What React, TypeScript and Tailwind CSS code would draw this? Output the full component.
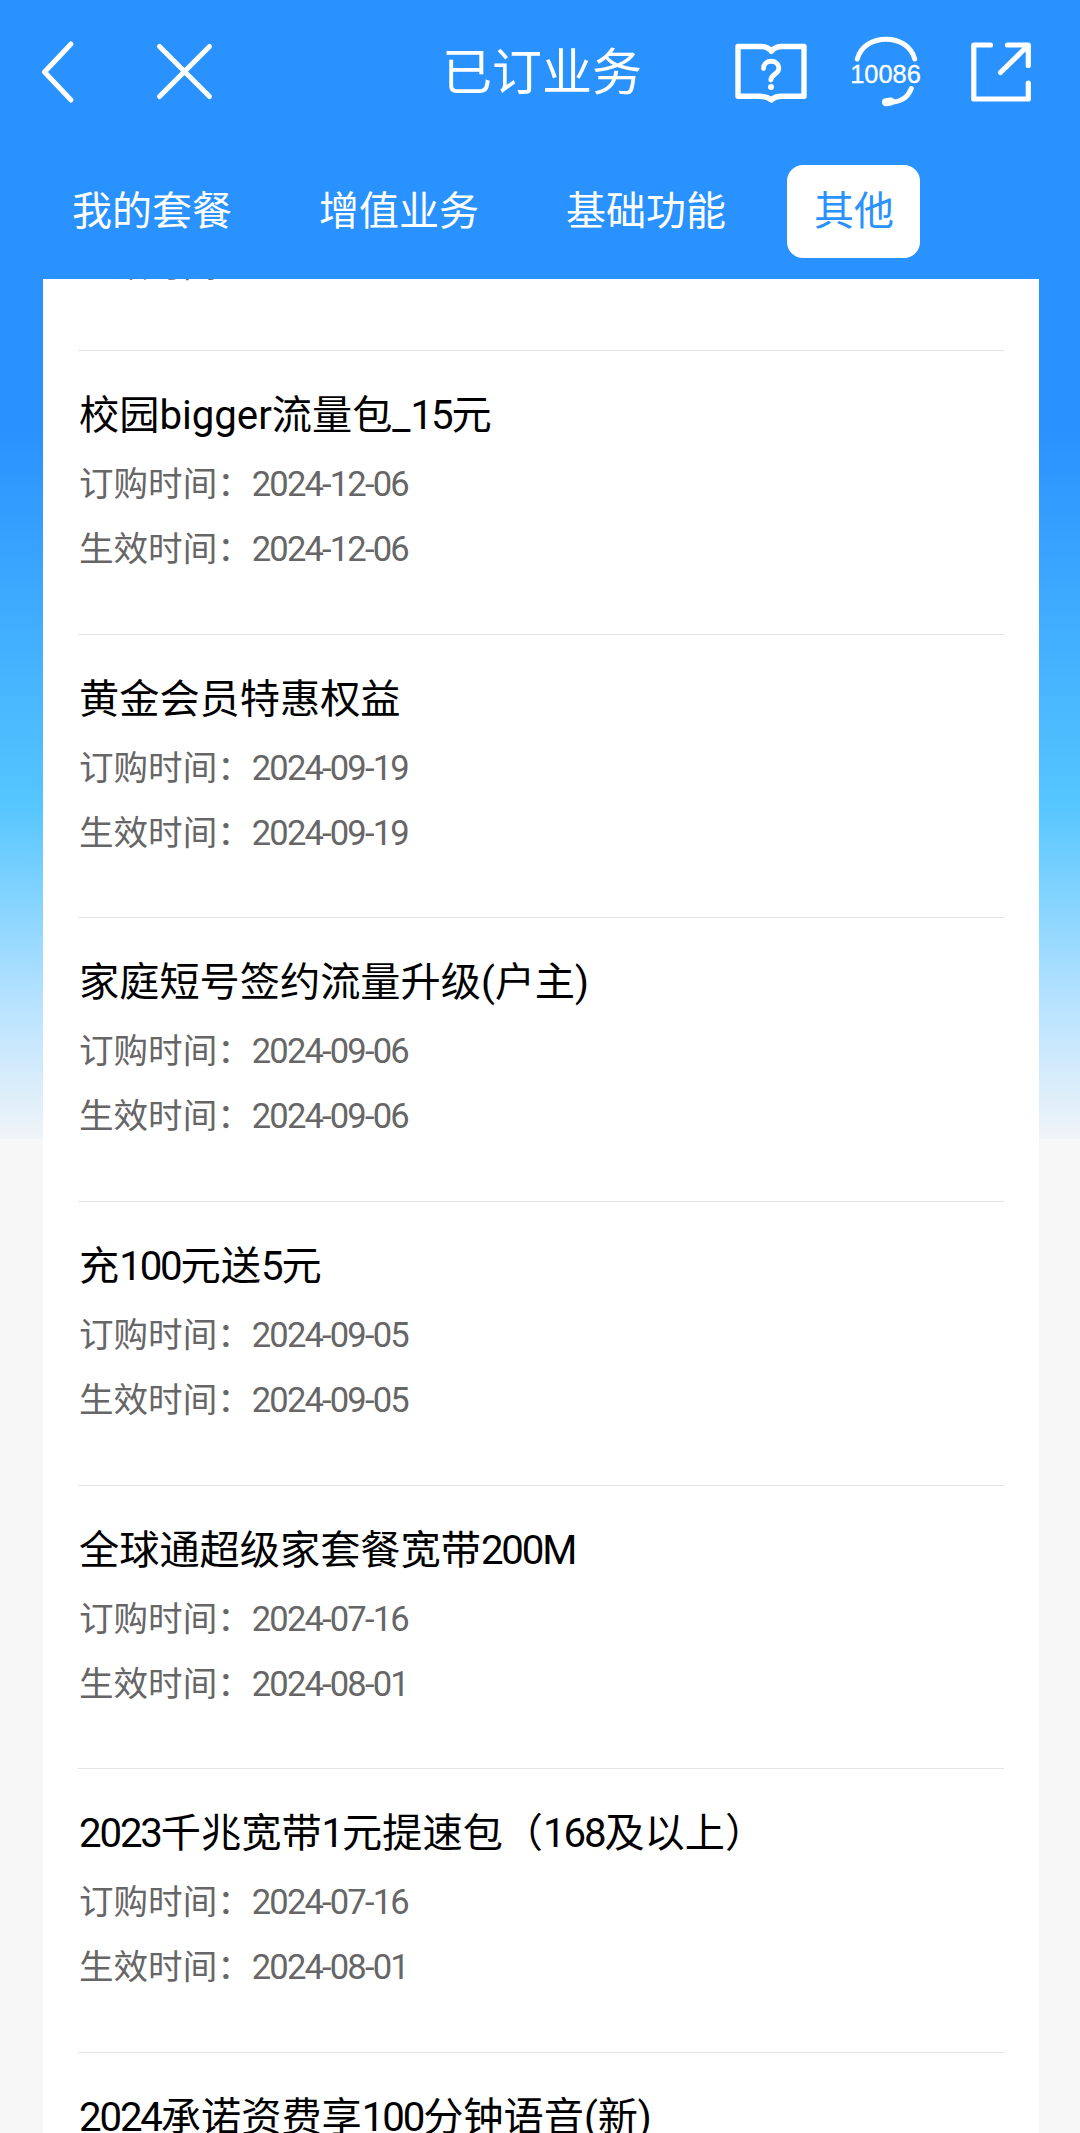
import { Fragment } from 'react';

interface Service {
  name: string;
  ordered: string;
  effective: string;
}

const tabs = ['我的套餐', '增值业务', '基础功能', '其他'];

const services: Service[] = [
  { name: '校园bigger流量包_15元', ordered: '2024-12-06', effective: '2024-12-06' },
  { name: '黄金会员特惠权益', ordered: '2024-09-19', effective: '2024-09-19' },
  { name: '家庭短号签约流量升级(户主)', ordered: '2024-09-06', effective: '2024-09-06' },
  { name: '充100元送5元', ordered: '2024-09-05', effective: '2024-09-05' },
  { name: '全球通超级家套餐宽带200M', ordered: '2024-07-16', effective: '2024-08-01' },
  { name: '2023千兆宽带1元提速包（168及以上）', ordered: '2024-07-16', effective: '2024-08-01' },
  { name: '2024承诺资费享100分钟语音(新)', ordered: '', effective: '' },
];

// Digits sit tighter than the rest of the text
function Tight({ text }: { text: string }) {
  return (
    <>
      {text.split(/([\d-]+)/).map((part, i) =>
        i % 2 ? (
          <span key={i} className="tracking-[-0.053em]">
            {part}
          </span>
        ) : (
          <Fragment key={i}>{part}</Fragment>
        )
      )}
    </>
  );
}

function Header() {
  return (
    <header className="grid h-36 grid-cols-[345px_1fr_345px] items-center text-white">
      <div className="flex items-center pl-10">
        <svg width="36" height="64" viewBox="40 40 36 64" fill="none" stroke="currentColor" strokeWidth="5" strokeLinecap="round" strokeLinejoin="round">
          <path d="M71 44 44.5 72 71 100" />
        </svg>
        <svg className="ml-[78px]" width="62" height="64" viewBox="154 40 62 64" fill="none" stroke="currentColor" strokeWidth="5" strokeLinecap="round">
          <path d="M159.5 46.5 209.5 96.5M209.5 46.5 159.5 96.5" />
        </svg>
      </div>

      <h1 className="pt-0.5 pl-1 text-center text-[50px] leading-none">已订业务</h1>

      <div className="flex items-center">
        <svg width="76" height="80" viewBox="735 32 76 80" fill="none" stroke="currentColor" strokeWidth="5.4" strokeLinecap="round" strokeLinejoin="round">
          <path d="M738 46.5H761Q768 46.5 771.3 51.3Q775 46.5 782 46.5H804V96.3H782Q775 96.3 771.3 100Q767 96.3 760 96.3H738Z" />
          <path d="M763.5 68.5C763.5 58.8 778.8 58.8 778.8 68.5C778.8 74 770.8 74.5 770.8 80" strokeWidth="4.8" />
          <circle cx="771" cy="87" r="3" fill="currentColor" stroke="none" />
        </svg>
        <svg className="ml-9" width="80" height="80" viewBox="847 32 80 80" fill="none" stroke="currentColor" strokeWidth="5" strokeLinecap="round">
          <path d="M857.3 59C864 32.5 908 32.5 914.7 59" />
          <path d="M911.3 88.5C908.5 96 902 101.5 892.5 102" />
          <path d="M886 102.2 890.5 101.5" strokeWidth="8" />
          <text x="885.5" y="83" textAnchor="middle" fontSize="25.4" fill="currentColor" stroke="currentColor" strokeWidth="0.3" fontFamily="Liberation Sans, sans-serif">
            10086
          </text>
        </svg>
        <svg className="ml-10" width="66" height="80" viewBox="967 32 66 80" fill="none" stroke="currentColor" strokeWidth="5.2" strokeLinecap="round" strokeLinejoin="round">
          <path d="M990.5 45H973.8V99H1028.3V83M1007.5 45H1028.3V65.5M1027 46.5 1000.5 72.5" />
        </svg>
      </div>
    </header>
  );
}

function Tabs({ active }: { active: string }) {
  return (
    <nav className="flex h-[135px] gap-[33px] pt-[21px] pl-[45px]">
      {tabs.map((tab) => (
        <button
          key={tab}
          className={
            tab === active
              ? 'ml-px h-[93px] rounded-2xl bg-white pr-[26px] pl-[27px] text-[40px] leading-none text-[#2a92ff]'
              : 'h-[93px] px-[27px] text-[40px] leading-none text-white'
          }
        >
          {tab}
        </button>
      ))}
    </nav>
  );
}

function ServiceItem({ service }: { service: Service }) {
  return (
    <li className="h-[283.7px] shrink-0 border-t border-[#e4e4e4] pt-[35px]">
      <h2 className="pl-px text-[40.2px] leading-[60px] whitespace-nowrap text-black">
        <Tight text={service.name} />
      </h2>
      <div className="mt-1.5 pl-px text-[34.56px] leading-[65px] text-[#666]">
        {service.ordered && (
          <p>
            订购时间：
            <Tight text={service.ordered} />
          </p>
        )}
        {service.effective && (
          <p>
            生效时间：
            <Tight text={service.effective} />
          </p>
        )}
      </div>
    </li>
  );
}

export default function App() {
  return (
    <div className="flex h-[2133px] w-[1080px] flex-col overflow-hidden bg-[#f7f7f7] bg-[linear-gradient(180deg,#2a92ff_0px,#2a92ff_430px,#55c6ff_803px,#b5e2ff_1000px,#f0f4f8_1139px,#f7f7f7_1139px)] font-['Roboto','Noto_Sans_CJK_SC',sans-serif]">
      <Header />
      <Tabs active="其他" />
      <main className="ml-[43px] min-h-0 w-[996px] flex-1 overflow-hidden bg-white px-[35px]">
        {/* tail of the row scrolled under the tab bar */}
        <div className="flex h-[71px] flex-col justify-end overflow-hidden pb-[52px]">
          <p className="shrink-0 pl-px text-[34.56px] leading-[65px] text-[#666]">生效时间：</p>
        </div>
        <ul className="flex flex-col">
          {services.map((service) => (
            <ServiceItem key={service.name} service={service} />
          ))}
        </ul>
      </main>
    </div>
  );
}
